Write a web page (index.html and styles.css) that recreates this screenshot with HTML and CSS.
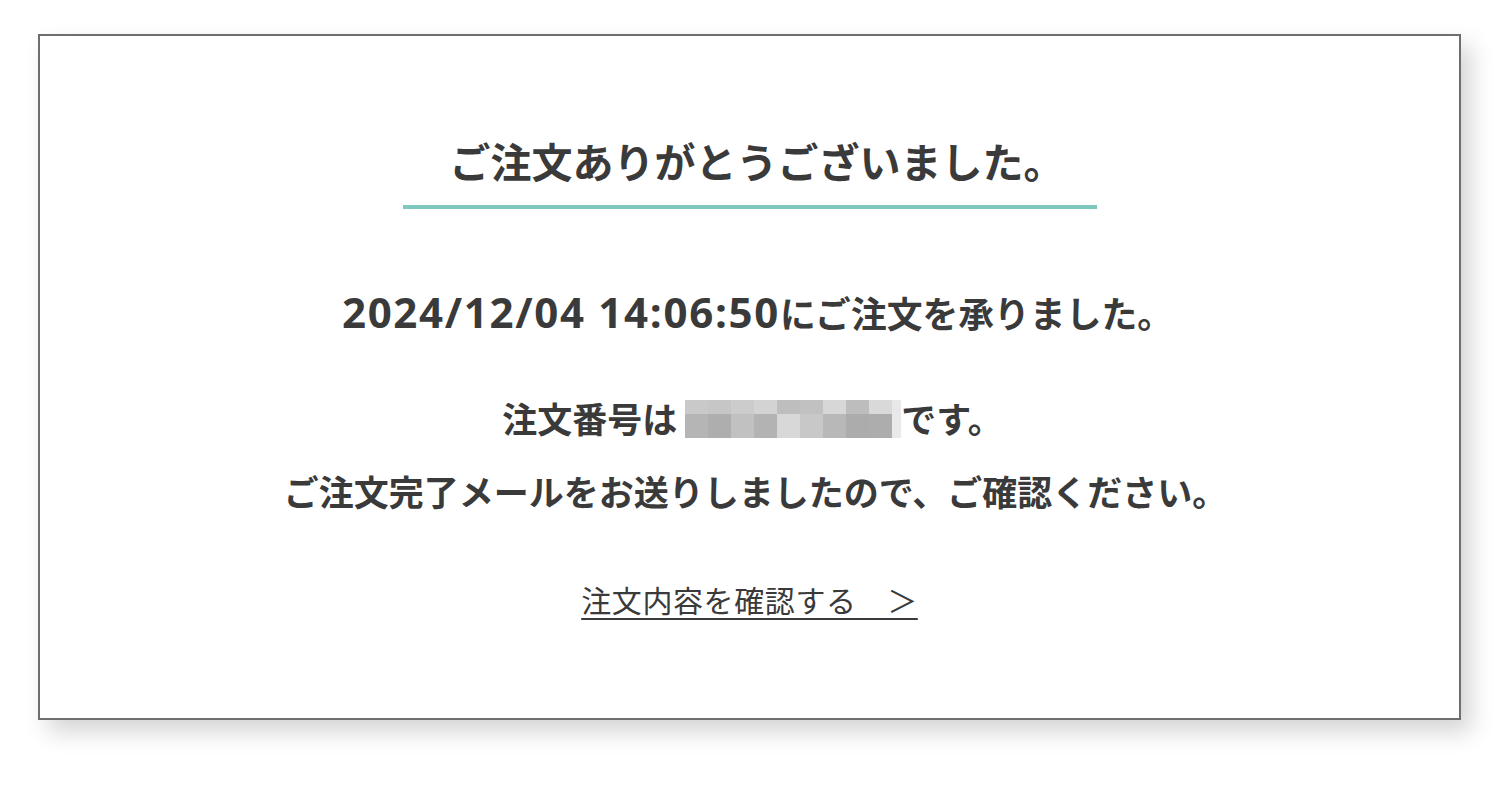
FILE: index.html
```html
<!DOCTYPE html>
<html lang="ja">
<head>
<meta charset="utf-8">
<title>ご注文ありがとうございました。</title>
<link rel="stylesheet" href="styles.css">
</head>
<body>
<div class="page">
  <div class="card">
    <h1 class="title">ご注文ありがとうございました。</h1>
    <p class="line date-line"><span class="date">2024/12/04 14:06:50</span><span class="date-jp">にご注文を承りました。</span></p>
    <p class="line number-line">注文番号は<span class="mosaic" aria-label="注文番号"><span class="row top"><i></i><i></i><i></i><i></i><i></i><i></i><i></i><i></i><i></i><i></i></span><span class="row bottom"><i></i><i></i><i></i><i></i><i></i><i></i><i></i><i></i><i></i><i></i></span></span>です。</p>
    <p class="line mail-line">ご注文完了メールをお送りしましたので、ご確認ください。</p>
    <a class="detail-link" href="#">注文内容を確認する　＞</a>
  </div>
</div>
</body>
</html>
```

FILE: styles.css
```css
html, body {
  margin: 0;
  padding: 0;
  background: #ffffff;
}

body {
  font-family: "Noto Sans CJK JP", "Noto Sans", sans-serif;
  color: #3a3a3a;
}

.page {
  padding: 34px 0 68px 38px;
}

.card {
  box-sizing: border-box;
  width: 1423px;
  height: 686px;
  border: 2px solid #6e6e6e;
  background: #fff;
  box-shadow: 10px 12px 22px rgba(0, 0, 0, 0.17);
  display: flex;
  flex-direction: column;
  align-items: center;
  padding-top: 96px;
}

.title {
  margin: 0;
  font-size: 41px;
  font-weight: 700;
  line-height: 57px;
  padding: 0 32px 16px 47px;
  border-bottom: 4px solid #7fc8bd;
  color: #3a3a3a;
}

.line {
  margin: 0;
  font-size: 35px;
  font-weight: 700;
  line-height: 50px;
  display: flex;
  align-items: center;
  white-space: nowrap;
}

.date-line {
  margin-top: 78px;
  padding-left: 16px;
}

.date {
  font-family: "Open Sans", "Noto Sans", sans-serif;
  font-size: 42px;
  font-weight: 700;
  letter-spacing: 1.7px;
}

.date-jp {
  font-size: 35.8px;
}

.number-line {
  margin-top: 56px;
  padding-left: 6px;
}

.mail-line {
  margin-top: 23px;
  padding-left: 12px;
}

.mosaic {
  display: flex;
  flex-direction: column;
  width: 216px;
  height: 38px;
  margin: 0 0 0 8px;
  position: relative;
  top: 1px;
}

.mosaic .row {
  display: flex;
}

.mosaic .top {
  height: 14px;
}

.mosaic .bottom {
  height: 24px;
}

.mosaic i {
  display: block;
  width: 23px;
  height: 100%;
}

.mosaic i:last-child {
  width: 9px;
}

.top i:nth-child(1) { background: #c9c9c9; }
.top i:nth-child(2) { background: #c6c6c6; }
.top i:nth-child(3) { background: #cccccc; }
.top i:nth-child(4) { background: #d3d3d3; }
.top i:nth-child(5) { background: #bebebe; }
.top i:nth-child(6) { background: #c1c1c1; }
.top i:nth-child(7) { background: #d7d7d7; }
.top i:nth-child(8) { background: #bdbdbd; }
.top i:nth-child(9) { background: #d9d9d9; }
.top i:nth-child(10) { background: #e8e8e8; }

.bottom i:nth-child(1) { background: #b5b5b5; }
.bottom i:nth-child(2) { background: #aeaeae; }
.bottom i:nth-child(3) { background: #c1c1c1; }
.bottom i:nth-child(4) { background: #b3b3b3; }
.bottom i:nth-child(5) { background: #d8d8d8; }
.bottom i:nth-child(6) { background: #c8c8c8; }
.bottom i:nth-child(7) { background: #b8b8b8; }
.bottom i:nth-child(8) { background: #acacac; }
.bottom i:nth-child(9) { background: #adadad; }
.bottom i:nth-child(10) { background: #e9e9e9; }

.detail-link {
  margin-top: 63px;
  font-size: 30px;
  font-weight: 400;
  line-height: 40px;
  letter-spacing: 0.6px;
  color: #3a3a3a;
  text-decoration: underline;
  text-decoration-thickness: 2px;
  text-underline-offset: 6px;
}
```
